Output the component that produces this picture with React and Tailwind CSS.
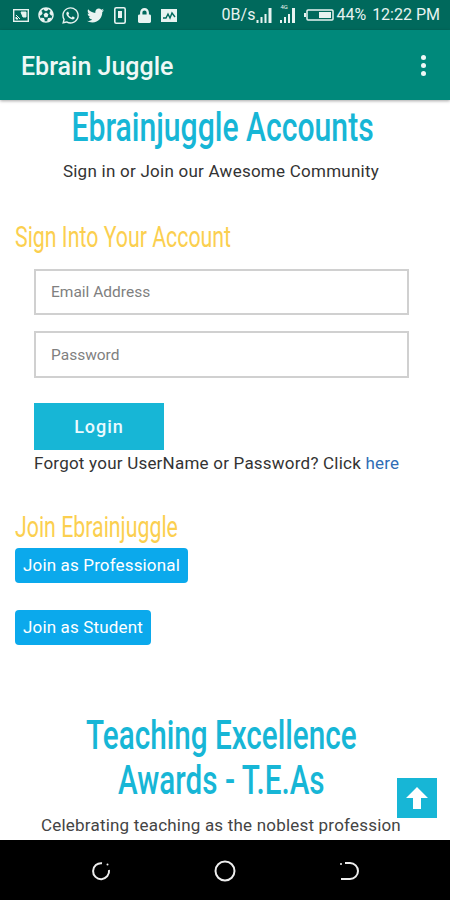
import { FaWhatsapp, FaTwitter, FaFutbol, FaLock } from "react-icons/fa";

const headingFont = "font-['Roboto',sans-serif]";

function SignalBars({ className }) {
    return (
        <svg viewBox="0 0 18 16" className={className} fill="#e8f3f1">
            <rect x="0" y="13" width="2" height="3" />
            <rect x="4" y="10" width="2" height="6" />
            <rect x="8" y="7" width="2" height="9" />
            <rect x="12" y="1" width="3" height="15" />
        </svg>
    );
}

function StatusBar() {
    return (
        <div className="h-[30px] bg-[#00695c] flex items-center pl-[13px] pr-[10px] text-[#e8f3f1]">
            <div className="flex items-center">
                <svg viewBox="0 0 16 13" className="w-4 h-[13px]">
                    <rect x="0.7" y="0.7" width="14.6" height="11.6" fill="none" stroke="#e8f3f1" strokeWidth="1.4" />
                    <path d="M3 10 L3 8 L5 10 Z M3 6 L7 10 M8 3 L13 3 L13 8 L10 8 Z" fill="#e8f3f1" stroke="#e8f3f1" />
                </svg>
                <FaFutbol className="w-4 h-4 ml-[9px]" />
                <FaWhatsapp className="w-[19px] h-[19px] ml-[7px]" />
                <FaTwitter className="w-[17px] h-[17px] ml-[7px]" />
                <svg viewBox="0 0 12 17" className="w-3 h-[17px] ml-[10px]">
                    <rect x="0.8" y="0.8" width="10.4" height="15.4" rx="1.5" fill="none" stroke="#e8f3f1" strokeWidth="1.6" />
                    <rect x="4" y="4" width="4" height="7" fill="#e8f3f1" />
                </svg>
                <FaLock className="w-[13px] h-[15px] ml-[12px]" />
                <svg viewBox="0 0 16 13" className="w-4 h-[13px] ml-[10px]">
                    <rect width="16" height="13" fill="#e8f3f1" />
                    <path d="M2 9 L5 9 L7 5 L9 9 L11 4 L14 8" fill="none" stroke="#00695c" strokeWidth="1.4" />
                </svg>
            </div>
            <div className="ml-auto flex items-center font-['Roboto',sans-serif] text-[16px] leading-none">
                <span>0B/s</span>
                <SignalBars className="w-[19px] h-4 ml-[1px]" />
                <div className="relative ml-[5px]">
                    <span className="absolute -top-[3px] left-0 text-[6px] leading-none">4G</span>
                    <SignalBars className="w-[18px] h-4" />
                </div>
                <svg viewBox="0 0 30 12" className="w-[30px] h-3 ml-[6px]">
                    <rect x="0" y="4" width="2" height="4" fill="#e8f3f1" />
                    <rect x="3" y="1" width="26" height="10" rx="1" fill="none" stroke="#e8f3f1" strokeWidth="1.5" />
                    <rect x="15" y="3" width="12" height="6" fill="#e8f3f1" />
                </svg>
                <span className="ml-[2px]">44%</span>
                <span className="ml-[6px]">12:22 PM</span>
            </div>
        </div>
    );
}

export default function App() {
    return (
        <div className="w-[450px] h-[900px] flex flex-col overflow-hidden bg-white font-['Roboto',sans-serif]">
            <StatusBar />

            {/* App bar */}
            <div className="h-[70px] bg-[#00897b] flex items-center justify-between pl-[21px] pr-[24px] shadow-[0_1px_3px_rgba(0,0,0,0.35)] z-10">
                <h1 className="text-[25px] font-medium text-[#eef8f6] translate-y-[2px]">Ebrain Juggle</h1>
                <div className="flex flex-col gap-[3px]">
                    <span className="w-[5px] h-[5px] rounded-full bg-[#eef8f6]"></span>
                    <span className="w-[5px] h-[5px] rounded-full bg-[#eef8f6]"></span>
                    <span className="w-[5px] h-[5px] rounded-full bg-[#eef8f6]"></span>
                </div>
            </div>

            {/* Content */}
            <div className="relative flex-1 overflow-hidden">
                <div className="flex justify-center pr-[5px]">
                    <h2 className={`${headingFont} mt-[4px] whitespace-nowrap text-center text-[41px] leading-[46px] font-medium text-[#17b6d6] scale-x-[0.735]`}>Ebrainjuggle Accounts</h2>
                </div>
                <p className="mt-[9px] pr-[8px] text-center text-[17px] leading-[24px] text-[#333] tracking-[0.25px]">Sign in or Join our Awesome Community</p>

                <h3 className={`${headingFont} mt-[36px] ml-[15px] whitespace-nowrap text-[29px] leading-[36px] text-[#fbcf4f] origin-left scale-x-[0.735]`}>Sign Into Your Account</h3>

                <div className="mt-[14px] ml-[34px] w-[375px] flex flex-col gap-[16px]">
                    <input placeholder="Email Address" className="h-[46px] px-[15px] border-2 border-[#d0d0d0] text-[15.5px] placeholder:text-[#808080] outline-none" />
                    <input placeholder="Password" className="h-[47px] px-[15px] border-2 border-[#d0d0d0] text-[15.5px] placeholder:text-[#808080] outline-none" />
                </div>

                <button className="block mt-[25px] ml-[34px] w-[130px] h-[47px] bg-[#17b6d6] text-[#eafaff] text-[18px] font-medium tracking-[1px]">Login</button>
                <p className="ml-[34px] mt-[1px] text-[17px] leading-[24px] text-[#333] tracking-[0.22px]">
                    Forgot your UserName or Password? Click <span className="text-[#2f6db5]">here</span>
                </p>

                <h3 className={`${headingFont} mt-[35px] ml-[15px] whitespace-nowrap text-[29px] leading-[34px] text-[#fbcf4f] origin-left scale-x-[0.735]`}>Join Ebrainjuggle</h3>
                <div className="ml-[15px] mt-[4px] flex flex-col items-start gap-[27px]">
                    <button className="h-[35px] px-[8px] rounded-[4px] bg-[#0ba9ec] text-white text-[17px] tracking-[0.15px]">Join as Professional</button>
                    <button className="h-[35px] px-[8px] rounded-[4px] bg-[#0ba9ec] text-white text-[17px] tracking-[0.15px]">Join as Student</button>
                </div>

                <div className="flex justify-center pr-[7px]">
                    <h2 className={`${headingFont} mt-[69px] whitespace-nowrap text-center text-[40px] leading-[44px] font-medium text-[#17b6d6] scale-x-[0.742] scale-y-[1.03]`}>
                        Teaching Excellence
                        <br />
                        Awards - T.E.As
                    </h2>
                </div>
                <p className="mt-[11px] pr-[8px] text-center text-[17px] leading-[24px] text-[#444] tracking-[0.2px]">Celebrating teaching as the noblest profession</p>

                {/* Scroll to top */}
                <button className="absolute left-[397px] top-[678px] w-10 h-10 bg-[#17b6d6] flex items-center justify-center">
                    <svg viewBox="0 0 24 24" className="w-[24px] h-[26px]" fill="white">
                        <path d="M12 1 L23 12 L16 12 L16 23 L8 23 L8 12 L1 12 Z" />
                    </svg>
                </button>
            </div>

            {/* Nav bar */}
            <div className="h-[60px] bg-black flex items-center pt-[2px]">
                <div className="w-[450px] flex items-center justify-between pl-[91px] pr-[91px]">
                    <svg viewBox="0 0 20 20" className="w-5 h-5" fill="none" stroke="#eee" strokeWidth="2">
                        <path d="M11 2.2 A8 8 0 1 0 18 9" />
                        <circle cx="16.5" cy="3.5" r="1" fill="#eee" stroke="none" />
                    </svg>
                    <svg viewBox="0 0 22 22" className="w-[22px] h-[22px]" fill="none" stroke="#eee" strokeWidth="2">
                        <circle cx="11" cy="11" r="9.5" />
                    </svg>
                    <svg viewBox="0 0 20 20" className="w-5 h-5" fill="none" stroke="#eee" strokeWidth="2">
                        <path d="M6 2 L11 2 A8 8 0 0 1 11 18 L2 18" />
                        <circle cx="2" cy="3" r="1" fill="#eee" stroke="none" />
                    </svg>
                </div>
            </div>
        </div>
    );
}
